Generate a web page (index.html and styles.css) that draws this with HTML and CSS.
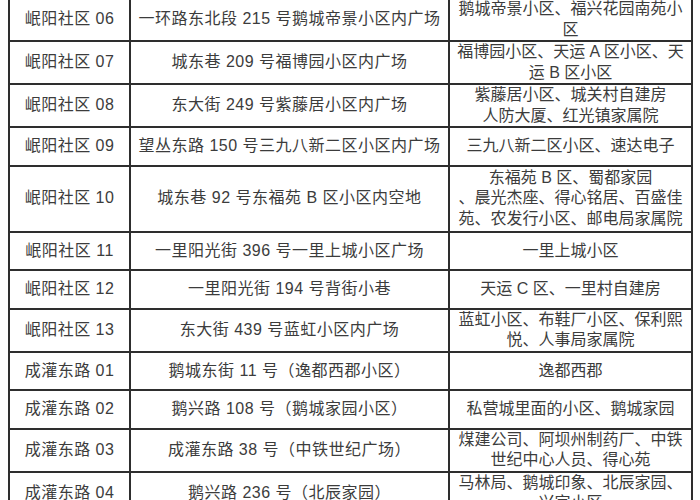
FILE: index.html
```html
<!DOCTYPE html>
<html lang="zh-CN">
<head>
<meta charset="utf-8">
<title>社区列表</title>
<link rel="stylesheet" href="styles.css">
</head>
<body>
<table class="grid">
  <colgroup>
    <col class="c1">
    <col class="c2">
    <col class="c3">
  </colgroup>
  <tbody>
    <tr class="r2"><td>岷阳社区 06</td><td>一环路东北段 215 号鹅城帝景小区内广场</td><td class="list">鹅城帝景小区、福兴花园南苑小<br>区</td></tr>
    <tr class="r2"><td>岷阳社区 07</td><td>城东巷 209 号福博园小区内广场</td><td class="list">福博园小区、天运 A 区小区、天<br>运 B 区小区</td></tr>
    <tr class="r2"><td>岷阳社区 08</td><td>东大街 249 号紫藤居小区内广场</td><td class="list">紫藤居小区、城关村自建房<br>人防大厦、红光镇家属院</td></tr>
    <tr class="r1"><td>岷阳社区 09</td><td>望丛东路 150 号三九八新二区小区内广场</td><td class="list">三九八新二区小区、速达电子</td></tr>
    <tr class="r3"><td>岷阳社区 10</td><td>城东巷 92 号东福苑 B 区小区内空地</td><td class="list">东福苑 B 区、蜀都家园<br>、晨光杰座、得心铭居、百盛佳<br>苑、农发行小区、邮电局家属院</td></tr>
    <tr class="r1"><td>岷阳社区 11</td><td>一里阳光街 396 号一里上城小区广场</td><td class="list">一里上城小区</td></tr>
    <tr class="r1"><td>岷阳社区 12</td><td>一里阳光街 194 号背街小巷</td><td class="list">天运 C 区、一里村自建房</td></tr>
    <tr class="r2"><td>岷阳社区 13</td><td>东大街 439 号蓝虹小区内广场</td><td class="list">蓝虹小区、布鞋厂小区、保利熙<br>悦、人事局家属院</td></tr>
    <tr class="r1"><td>成灌东路 01</td><td>鹅城东街 11 号（逸都西郡小区）</td><td class="list">逸都西郡</td></tr>
    <tr class="r1"><td>成灌东路 02</td><td>鹅兴路 108 号（鹅城家园小区）</td><td class="list">私营城里面的小区、鹅城家园</td></tr>
    <tr class="r2"><td>成灌东路 03</td><td>成灌东路 38 号（中铁世纪广场）</td><td class="list">煤建公司、阿坝州制药厂、中铁<br>世纪中心人员、得心苑</td></tr>
    <tr class="r2"><td>成灌东路 04</td><td>鹅兴路 236 号（北辰家园）</td><td class="list">马林局、鹅城印象、北辰家园、<br>兴家小区</td></tr>
  </tbody>
</table>
</body>
</html>
```
FILE: styles.css
```css
html, body {
  margin: 0;
  padding: 0;
  background: #ffffff;
}

body {
  font-family: "Liberation Sans", "Noto Sans CJK SC", sans-serif;
  font-size: 16px;
  color: #3c3c3c;
}

.grid {
  border-collapse: collapse;
  table-layout: fixed;
  width: 683px;
  margin: -3px 0 0 8px;
}

.c1 { width: 121px; }
.c2 { width: 319px; }
.c3 { width: 243px; }

.grid td {
  border: 2px solid #2e2e2e;
  padding: 0 2px;
  text-align: center;
  vertical-align: middle;
  line-height: 20.5px;
  letter-spacing: 0.5px;
  white-space: nowrap;
  overflow: hidden;
}

.grid td.list {
  letter-spacing: 0;
}

.r1 td { height: 36.6px; }
.r2 td { height: 41px; }
.r3 td { height: 64px; }
```
